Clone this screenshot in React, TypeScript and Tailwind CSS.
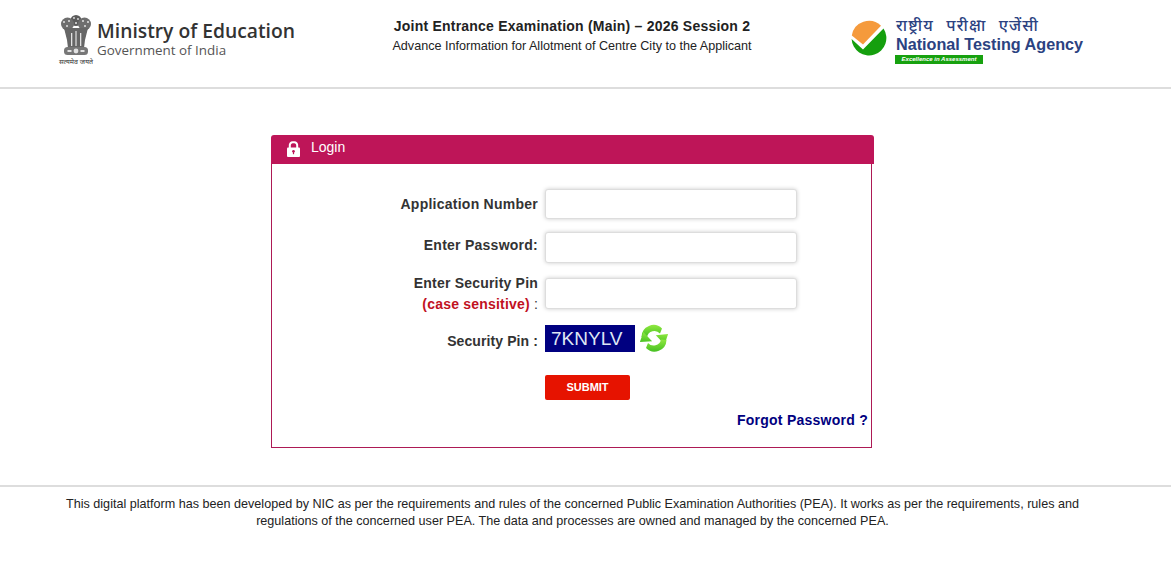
import React from "react";

function Emblem() {
  return (
    <svg width="36" height="52" viewBox="0 0 36 52" className="shrink-0">
      <g fill="#5c5c5c">
        <ellipse cx="18" cy="6.5" rx="5.5" ry="5.5" />
        <ellipse cx="9.5" cy="10" rx="6.5" ry="6.5" fill="#6e6e6e" />
        <ellipse cx="26.5" cy="10" rx="6.5" ry="6.5" fill="#6e6e6e" />
        <path d="M6 14 L30 14 L27 26 L26 34 L10 34 L9 26 Z" fill="#666" />
        <rect x="6" y="33" width="24" height="8" rx="3.5" fill="#777" />
      </g>
      <g fill="#e2e2e2">
        <circle cx="6" cy="8" r="1" />
        <circle cx="11" cy="7" r="1" />
        <circle cx="9" cy="12" r="1" />
        <circle cx="16" cy="4" r="0.9" />
        <circle cx="20" cy="5" r="0.9" />
        <circle cx="18" cy="9" r="1" />
        <circle cx="25" cy="7" r="1" />
        <circle cx="30" cy="8" r="1" />
        <circle cx="27" cy="12" r="1" />
        <rect x="13" y="19" width="1.3" height="13" />
        <rect x="17.4" y="17" width="1.2" height="15" />
        <rect x="22" y="19" width="1.3" height="13" />
        <circle cx="18" cy="37" r="2.4" />
        <rect x="9.5" y="36" width="4" height="2" />
        <rect x="22.5" y="36" width="4" height="2" />
      </g>
      <text x="18" y="50" textAnchor="middle" fontSize="7" fill="#333" fontFamily="'Noto Sans', 'Liberation Sans', sans-serif">
        सत्यमेव जयते
      </text>
    </svg>
  );
}

function NtaMark() {
  return (
    <svg width="36" height="36" viewBox="0 0 36 36" className="shrink-0">
      <path d="M0.8 15.5 A17.3 17.3 0 0 1 30 5.8 L12 24.5 Z" fill="#f59a3c" />
      <path d="M0.6 19 A17.4 17.4 0 1 0 32.5 8.5 L12 29.5 Z" fill="#159f0e" />
    </svg>
  );
}

function Lock() {
  return (
    <svg width="13" height="16" viewBox="0 0 13 16">
      <path d="M2.8 8 V4.5 a2.9 2.9 0 0 1 2.9 -3.2 h1.6 a2.9 2.9 0 0 1 2.9 3.2 V8" fill="none" stroke="#fff" strokeWidth="2" />
      <rect x="0" y="6.5" width="13" height="9.5" rx="1" fill="#fff" />
      <circle cx="6.5" cy="10.2" r="1.3" fill="#be1558" />
      <rect x="5.9" y="10.2" width="1.2" height="3" fill="#be1558" />
    </svg>
  );
}

function Refresh() {
  return (
    <svg width="28" height="28" viewBox="0 0 28 28">
      <defs>
        <linearGradient id="rf" x1="0" y1="0" x2="0" y2="1">
          <stop offset="0" stopColor="#8fe83f" />
          <stop offset="1" stopColor="#46c022" />
        </linearGradient>
      </defs>
      <path d="M1.5 13 A12 12 0 0 1 22 4.5 L20 9.5 A7.5 7.5 0 0 0 7 13 Z" fill="url(#rf)" />
      <path d="M15.5 12 L27.5 9 L25.5 20 Z" fill="url(#rf)" transform="rotate(8 21 14)" />
      <path d="M26.5 16 A12 12 0 0 1 6 24 L8 19 A7.5 7.5 0 0 0 21 15.5 Z" fill="url(#rf)" />
      <path d="M12.5 16.5 L0.5 19 L2.5 8.5 Z" fill="url(#rf)" transform="rotate(8 7 14)" />
    </svg>
  );
}

const inputClass =
  "ml-[7px] w-[252px] bg-white border border-[#ddd] rounded-[3px] shadow-[0_0_4px_rgba(0,0,0,0.2)]";
const labelClass = "w-[266px] text-right text-[14px] font-bold";

export default function App() {
  return (
    <div className="min-h-[566px] bg-white font-['Liberation_Sans',Arial,sans-serif] text-[#333]">
      <header className="h-[89px] border-b-2 border-[#ddd] flex items-start">
        <div className="w-[345px] pl-[58px] pt-[14px] flex">
          <Emblem />
          <div className="ml-[3px] pt-[4px] font-['Open_Sans',sans-serif]">
            <div className="text-[19.3px] leading-[25px] font-semibold text-[#333] whitespace-nowrap">Ministry of Education</div>
            <div className="text-[13.4px] leading-[14px] text-[#555] whitespace-nowrap">Government of India</div>
          </div>
        </div>
        <div className="w-[454px] pt-[17px] text-center text-[#222]">
          <div className="text-[14px] leading-[19px] font-bold tracking-[0.22px]">Joint Entrance Examination (Main) – 2026 Session 2</div>
          <div className="text-[12.6px] leading-[20px]">Advance Information for Allotment of Centre City to the Applicant</div>
        </div>
        <div className="pl-[52px] pt-[17px] flex items-start">
          <div className="pt-[3px]"><NtaMark /></div>
          <div className="ml-[9px]">
            <div className="text-[16px] leading-[17px] text-[#2b4281] font-medium tracking-[1.2px] [word-spacing:7px] font-['Noto_Sans','Liberation_Sans',sans-serif] whitespace-nowrap">राष्ट्रीय परीक्षा एजेंसी</div>
            <div className="text-[16.2px] leading-[18px] font-bold text-[#2b4281] mt-[1px] whitespace-nowrap">National Testing Agency</div>
            <div className="mt-[2px] -ml-[1px] w-[88px] h-[9px] bg-[#17a10f] text-white text-[6px] leading-[9px] font-bold italic text-center whitespace-nowrap">Excellence in Assessment</div>
          </div>
        </div>
      </header>

      <main className="pt-[46px] pb-[37px] pl-[271px]">
        <div className="w-[603px] h-[29px] bg-[#be1558] rounded-t-[3px] flex items-center pl-[16px] text-white">
          <div className="pb-[2px]"><Lock /></div>
          <span className="ml-[11px] pb-[4px] text-[14px]">Login</span>
        </div>
        <div className="w-[601px] h-[284px] border border-t-0 border-[#ad1a55] pt-[25px] flex flex-col">
          <div className="flex items-center">
            <label className={`tracking-[0.25px] ${labelClass}`}>Application Number</label>
            <input className={`h-[30px] ${inputClass}`} />
          </div>
          <div className="flex items-center mt-[13px]">
            <label className={`pb-[4px] tracking-[0.25px] ${labelClass}`}>Enter Password:</label>
            <input className={`h-[31px] ${inputClass}`} />
          </div>
          <div className="flex items-start mt-[10px]">
            <label className={`leading-[21px] tracking-[0.2px] ${labelClass}`}>
              <div>Enter Security Pin</div>
              <div><span className="text-[#c1121f]">(case sensitive)</span> <span className="font-normal">:</span></div>
            </label>
            <input className={`mt-[5px] h-[31px] ${inputClass}`} />
          </div>
          <div className="flex items-start mt-[10px]">
            <label className={`mt-[6px] tracking-[0.1px] ${labelClass}`}>Security Pin :</label>
            <div className="ml-[7px] w-[90px] h-[27px] bg-[#000080] text-[#dfe6f5] text-[19px] leading-[27px] pl-[6px]">7KNYLV</div>
            <div className="ml-[5px] -mt-[1px]"><Refresh /></div>
          </div>
          <button className="ml-[273px] mt-[23px] w-[85px] h-[25px] bg-[#e61300] rounded-[2px] text-white text-[11px] font-bold">SUBMIT</button>
          <div className="mt-[10px] pr-[3px] text-right text-[14px] font-bold text-[#000080] tracking-[0.25px]">Forgot Password ?</div>
        </div>
      </main>

      <footer className="border-t-2 border-[#ddd] pt-[9px] text-center text-[12.6px] text-[#222] leading-[17px] pl-[37px] pr-[63px]">
        <p>This digital platform has been developed by NIC as per the requirements and rules of the concerned Public Examination Authorities (PEA). It works as per the requirements, rules and</p>
        <p>regulations of the concerned user PEA. The data and processes are owned and managed by the concerned PEA.</p>
      </footer>
    </div>
  );
}
